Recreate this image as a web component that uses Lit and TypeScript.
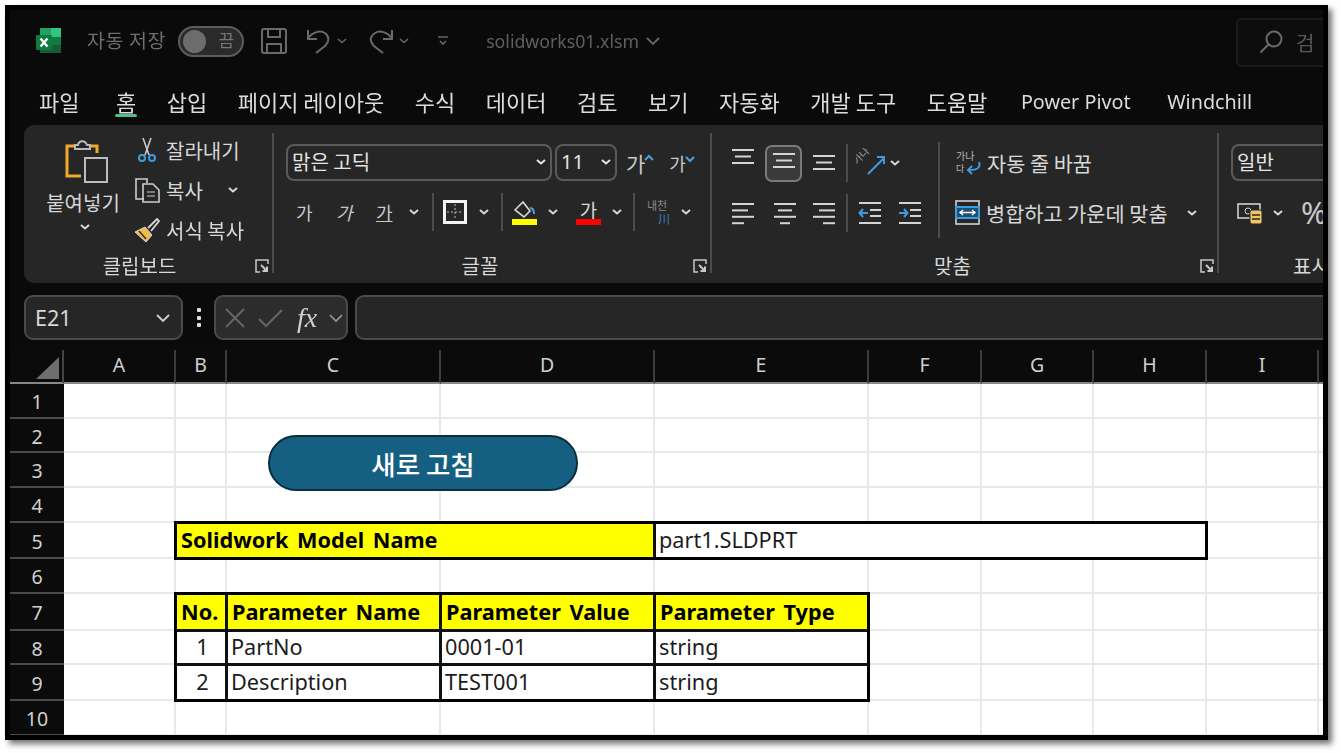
import { LitElement, html, css, svg } from 'lit';
import { customElement } from 'lit/decorators.js';

const COLS = ['A', 'B', 'C', 'D', 'E', 'F', 'G', 'H', 'I', 'J'];
const ROWS = [1, 2, 3, 4, 5, 6, 7, 8, 9, 10];
const TABS = ['파일', '홈', '삽입', '페이지 레이아웃', '수식', '데이터', '검토', '보기', '자동화', '개발 도구', '도움말', 'Power Pivot', 'Windchill'];

// cells with content, keyed by "col+row"
const CELLS: Record<string, { text: string; cls: string; span?: number }> = {
  B5: { text: 'Solidwork Model Name', cls: 'box head', span: 3 },
  E5: { text: 'part1.SLDPRT', cls: 'box', span: 4 },
  B7: { text: 'No.', cls: 'box head' },
  C7: { text: 'Parameter Name', cls: 'box head' },
  D7: { text: 'Parameter Value', cls: 'box head' },
  E7: { text: 'Parameter Type', cls: 'box head' },
  B8: { text: '1', cls: 'box num' },
  C8: { text: 'PartNo', cls: 'box' },
  D8: { text: '0001-01', cls: 'box' },
  E8: { text: 'string', cls: 'box' },
  B9: { text: '2', cls: 'box num' },
  C9: { text: 'Description', cls: 'box' },
  D9: { text: 'TEST001', cls: 'box' },
  E9: { text: 'string', cls: 'box' },
};
// columns swallowed by a merged cell
const HIDDEN = ['C5', 'D5', 'F5', 'G5', 'H5'];

const chev = (cls = 'chev') => html`<svg class=${cls} width="12" height="8" viewBox="0 0 12 8"><path d="M2 2l4 3.5L10 2" fill="none" stroke="currentColor" stroke-width="2"/></svg>`;

// three or more horizontal lines for the alignment buttons
const lines = (rows: [number, number][], color = '#d4d4d4') => html`<svg width="24" height="24" viewBox="0 0 24 24">
  ${rows.map(([a, b], i) => svg`<rect x=${a} y=${2 + i * (rows.length === 4 ? 6.4 : 6.5)} width=${b - a} height="2" fill=${color}/>`)}
</svg>`;

const launcher = html`<svg class="launch" width="14" height="14" viewBox="0 0 14 14" fill="none" stroke="#c8c8c8" stroke-width="1.5">
  <path d="M13 5V1H1v12h4"/><path d="M6 6l6 6M12 7.500V12H7.500" stroke-width="2"/>
</svg>`;

@customElement('app-root')
export class AppRoot extends LitElement {
  static styles = css`
    :host {
      display: block;
      font-family: 'Noto Sans CJK KR', 'Noto Sans', sans-serif;
    }
    .page {
      width: 1341px;
      height: 753px;
      background: #fff;
      padding: 5px 0 0 5px;
      box-sizing: border-box;
      overflow: hidden;
    }
    .window {
      width: 1323px;
      height: 735px;
      box-sizing: border-box;
      border: 5px solid #000;
      background: #0a0a0a;
      box-shadow: 4px 4px 6px rgba(0, 0, 0, 0.55);
      overflow: hidden;
      color: #d8d8d8;
      filter: blur(0.45px);
    }

    /* title bar */
    .title {
      height: 65px;
      box-sizing: border-box;
      display: flex;
      align-items: center;
      padding: 0 0 3px 26px;
      color: #6e6e6e;
      font-size: 19.5px;
      position: relative;
    }
    .auto { margin-left: 25px; padding-bottom: 3px; letter-spacing: 0.6px; }
    .toggle {
      width: 66px;
      height: 31px;
      box-sizing: border-box;
      margin-left: 12px;
      border: 2px solid #5c5c5c;
      border-radius: 16px;
      background: #2a2a2a;
      display: flex;
      align-items: center;
      justify-content: space-between;
      padding: 0 8px 0 3px;
      font-size: 17px;
      color: #777;
    }
    .toggle span:last-child { padding-bottom: 3px; }
    .knob { width: 23px; height: 23px; border-radius: 50%; background: #6c6c6c; }
    .save { margin-left: 17px; }
    .undo { margin-left: 20px; }
    .q-chev { margin-left: 5px; color: #666; }
    .redo { margin-left: 21px; }
    .qat { margin-left: 27px; }
    .file { margin-left: 37px; font-family: 'Noto Sans', sans-serif; font-size: 17.7px; color: #5f5f5f; }
    .file-chev { margin-left: 6px; color: #666; }
    .search {
      margin-left: auto;
      width: 87px;
      height: 49px;
      margin-top: 2px;
      box-sizing: border-box;
      border: 2px solid #1b1b1b;
      border-right: 0;
      border-radius: 6px 0 0 6px;
      background: #0d0d0d;
      display: flex;
      align-items: center;
      gap: 13px;
      padding-left: 21px;
      font-size: 20px;
      color: #5a5a5a;
    }

    /* tabs */
    .tabs {
      height: 50px;
      display: flex;
      align-items: center;
      gap: 30.5px;
      padding: 2px 0 0 29px;
      box-sizing: border-box;
      font-size: 22px;
      color: #dcdcdc;
      white-space: nowrap;
    }
    .tab { position: relative; }
    .tab.on { margin-left: 6px; }
    .tab.latin { font-family: 'Noto Sans', sans-serif; font-size: 19.8px; margin-left: 3px; }
    .tab.latin:last-child { margin-left: 6px; }
    .tab.on::after {
      content: '';
      position: absolute;
      left: -1px;
      right: -1px;
      bottom: 0;
      height: 3px;
      border-radius: 2px;
      background: #4fbf8d;
    }

    /* ribbon */
    .ribbon {
      margin-left: 14px;
      height: 158px;
      box-sizing: border-box;
      padding-top: 8px;
      background: #262626;
      border-radius: 10px 0 0 10px;
      display: flex;
      align-items: flex-start;
      overflow: hidden;
      font-size: 20px;
    }
    .vsep { flex: none; width: 2px; height: 140px; background: #4c4c4c; }
    .group { flex: none; height: 145px; display: flex; flex-direction: column; }
    .group.clip { width: 248px; }
    .group.font { width: 436px; }
    .group.align { width: 505px; }
    .group.number { width: 110px; }
    .body { flex: 1; min-height: 0; }
    .caption { height: 26px; display: flex; align-items: center; font-size: 20px; color: #d8d8d8; }
    .caption span { flex: 1; text-align: center; }
    .font .caption span, .align .caption span { padding-right: 7px; }
    .launch { margin: 2px 3px 0 0; }

    .clip .body { display: flex; padding-left: 20px; }
    .paste { width: 78px; margin-right: 12px; display: flex; flex-direction: column; align-items: center; font-size: 20px; line-height: 24px; }
    .paste svg:first-child { margin: 6px 0 8px 7px; }
    .paste .chev { margin: 8px 0 0 4px; }
    .small { display: flex; flex-direction: column; margin-top: -3px; }
    .small .row { height: 40px; display: flex; align-items: center; gap: 6px; font-size: 20px; white-space: nowrap; }
    .icon-slot { width: 26px; display: flex; justify-content: center; }
    .icon-slot.cut { box-sizing: border-box; justify-content: flex-start; padding-left: 3px; }
    .row .chev { margin-left: 18px; }

    .select {
      height: 37px;
      box-sizing: border-box;
      border: 2px solid #5a5a5a;
      border-radius: 8px;
      display: flex;
      align-items: center;
      justify-content: space-between;
      padding: 0 3px 2px 4px;
      color: #e4e4e4;
    }
    .font .body { padding: 11px 0 0 12px; }
    .font-top { display: flex; align-items: center; gap: 3px; }
    .select.face { width: 266px; }
    .select.size { width: 62px; font-family: 'Noto Sans', sans-serif; }
    .grow { margin-left: 6px; display: flex; align-items: center; gap: 15px; font-size: 21px; color: #c8c8c8; }
    .grow span { display: flex; align-items: flex-start; }
    .grow span + span { font-size: 18px; }
    .grow svg { margin-top: 6px; margin-left: -1px; }
    .font-row {
      margin-top: 12px;
      padding-left: 10px;
      height: 38px;
      display: grid;
      grid-template-columns: 40px 40px 32px 24px 11px 35px 23px 11px 35px 29px 35px 22px 12px 35px auto;
      align-items: center;
    }
    .ga { font-size: 18px; color: #c8c8c8; }
    .ga.i { font-style: italic; }
    .ga.u { text-decoration: underline; }
    .mini-sep { width: 2px; height: 38px; background: #4c4c4c; }
    .swatch { width: 25px; display: flex; flex-direction: column; align-items: center; font-size: 19px; line-height: 19px; }
    .bar { width: 25px; height: 6px; }
    .bar.y { background: #ffff00; }
    .bar.r { background: #ff0000; }
    .phonetic { font-size: 11px; line-height: 13px; color: #8a8a8a; text-align: center; width: 24px; white-space: nowrap; }
    .phonetic b { display: block; font-weight: 400; color: #3a85bf; font-size: 12px; line-height: 13px; letter-spacing: -1px; text-align: right; }

    .align .body { display: flex; padding: 11px 0 0 19px; }
    .a-grid { width: 207px; }
    .a-row { height: 37px; display: grid; align-items: center; }
    .a-row.one { grid-template-columns: 34px 47px 34px 10px 33px auto; }
    .a-row.two { margin-top: 13px; grid-template-columns: 42px 39px 34px 12px 40px auto; }
    .top { align-self: start; margin-top: 3px; }
    .bot { align-self: end; margin-bottom: -1px; }
    .picked {
      width: 37px;
      height: 37px;
      box-sizing: border-box;
      border: 2px solid #7a7a7a;
      border-radius: 7px;
      background: #3a3a3a;
      display: flex;
      align-items: center;
      justify-content: center;
    }
    .short-sep { width: 2px; height: 38px; background: #4c4c4c; }
    .wrap-sep { width: 2px; height: 96px; margin-top: -2px; background: #4c4c4c; }
    .a-text { padding-left: 15px; }
    .a-text .row { height: 37px; display: flex; align-items: center; gap: 6px; white-space: nowrap; font-size: 20.8px; }
    .a-text .row + .row { margin-top: 13px; }
    .a-text .chev { margin-left: 12px; }

    .number .body { padding: 11px 0 0 12px; white-space: nowrap; }
    .select.general { width: 120px; border-right: 0; border-radius: 8px 0 0 8px; }
    .num-row { margin-top: 13px; padding-left: 6px; height: 37px; display: flex; align-items: center; gap: 9px; }
    .percent { font-family: 'Noto Sans', sans-serif; font-size: 31px; color: #c8c8c8; margin-left: 8px; line-height: 1; }
    .number .caption { padding-left: 74px; white-space: nowrap; }

    /* formula bar */
    .formula {
      height: 45px;
      margin-top: 12px;
      padding-left: 14px;
      display: flex;
      align-items: stretch;
    }
    .name {
      width: 159px;
      box-sizing: border-box;
      border: 2px solid #4a4a4a;
      border-radius: 9px;
      background: #262626;
      display: flex;
      align-items: center;
      justify-content: space-between;
      padding: 0 10px 0 9px;
      font-family: 'Noto Sans', sans-serif;
      font-size: 21.5px;
      color: #d8d8d8;
    }
    .dots { width: 31px; display: flex; flex-direction: column; align-items: center; justify-content: center; gap: 3.5px; }
    .dots i { width: 4px; height: 4px; background: #ddd; border-radius: 1px; }
    .fx {
      width: 134px;
      box-sizing: border-box;
      border: 2px solid #4a4a4a;
      border-radius: 9px;
      background: #2c2c2c;
      display: flex;
      align-items: center;
      padding-left: 8px;
      gap: 11px;
    }
    .fx-t { font-family: 'Liberation Serif', serif; font-style: italic; font-weight: 400; font-size: 28px; color: #d0d0d0; margin-left: 3px; }
    .input {
      flex: 1;
      margin-left: 7px;
      box-sizing: border-box;
      border: 2px solid #4a4a4a;
      border-right: 0;
      border-radius: 9px 0 0 9px;
      background: #262626;
    }

    /* sheet */
    .sheet { position: relative; margin-top: 10px; height: 385px; overflow: hidden; }
    .grid {
      display: grid;
      grid-template-columns: 54px 112px 51px 214px 214px 214px 113px 112px 113px 112px 112px;
      grid-template-rows: 34px 35px 34px 35px 35px 36px 35px 37px 34px 36px 35px;
      background: #fff;
    }
    .corner, .ch, .rh { background: #0b0b0b; color: #d0d0d0; font-family: 'Noto Sans', sans-serif; font-size: 19.5px; display: flex; align-items: center; justify-content: center; box-sizing: border-box; }
    .corner { justify-content: flex-start; padding: 4px 0 0 26px; border-bottom: 2px solid #888; border-right: 2px solid #444; }
    .ch { border-right: 2px solid #3c3c3c; border-bottom: 2px solid #888; padding-bottom: 4px; }
    .rh { border-bottom: 2px solid #4a4a4a; padding-top: 2px; }
    .cell {
      box-sizing: border-box;
      border-right: 2px solid #e8e8e8;
      border-bottom: 2px solid #e8e8e8;
      font-family: 'Noto Sans', sans-serif;
      font-size: 21.7px;
      color: #1c1c1c;
      display: flex;
      align-items: center;
      white-space: nowrap;
      overflow: hidden;
      padding-bottom: 2px;
    }
    .cell.box {
      border: 2px solid #111;
      margin: -1px 0 0 -1px;
      padding-left: 3px;
    }
    .cell.head { background: #ffff00; font-weight: 700; color: #000; padding-left: 4px; word-spacing: 3px; }
    .cell.num { justify-content: center; }
    .frame { border: 3px solid #000; margin: -2px -1px -1px -2px; pointer-events: none; }
    .refresh {
      position: absolute;
      left: 258px;
      top: 85px;
      width: 310px;
      height: 56px;
      box-sizing: border-box;
      border: 2px solid #0c2d3e;
      border-radius: 28px;
      background: #156082;
      color: #fff;
      font-size: 26.5px;
      font-weight: 500;
      display: flex;
      align-items: center;
      justify-content: center;
    }
  `;

  private renderTitle() {
    return html`<div class="title">
      <svg width="26" height="26" viewBox="0 0 26 26">
        <rect x="4" y="0" width="21" height="9" fill="#21a366"/>
        <rect x="4" y="9" width="21" height="8" fill="#107c41"/>
        <rect x="4" y="17" width="21" height="8" fill="#185c37"/>
        <rect x="15" y="0" width="10" height="9" fill="#33c481"/>
        <rect x="0" y="7" width="16" height="15" rx="1" fill="#0f7b3f"/>
        <path d="M4.500 10.500l7 8M11.500 10.500l-7 8" stroke="#fff" stroke-width="2.4"/>
      </svg>
      <span class="auto">자동 저장</span>
      <div class="toggle"><span class="knob"></span><span>끔</span></div>
      <svg class="save" width="26" height="26" viewBox="0 0 26 26" fill="none" stroke="#6a6a6a" stroke-width="2">
        <path d="M1 3a2 2 0 012-2h20a2 2 0 012 2v20a2 2 0 01-2 2H3a2 2 0 01-2-2z"/><path d="M7 1v8h12V1M6 25v-9h14v9"/>
      </svg>
      <svg class="undo" width="24" height="26" viewBox="0 0 24 26" fill="none" stroke="#6a6a6a" stroke-width="2">
        <path d="M1 2v9h9"/><path d="M1 10c5-6 12-8 17-5 5 4 4 9 0 13l-9 7"/>
      </svg>
      <svg class="q-chev" width="12" height="8" viewBox="0 0 12 8"><path d="M2 2l4 3.5L10 2" fill="none" stroke="currentColor" stroke-width="1.6"/></svg>
      <svg class="redo" width="24" height="26" viewBox="0 0 24 26" fill="none" stroke="#6a6a6a" stroke-width="2">
        <path d="M23 2v9h-9"/><path d="M23 10C18 4 11 2 6 5c-6 4-5 9-1 13l9 7"/>
      </svg>
      <svg class="q-chev" width="12" height="8" viewBox="0 0 12 8"><path d="M2 2l4 3.5L10 2" fill="none" stroke="currentColor" stroke-width="1.6"/></svg>
      <svg class="qat" width="12" height="12" viewBox="0 0 12 12" fill="none" stroke="#666" stroke-width="1.6"><path d="M1 2h10M3 6l3 3 3-3"/></svg>
      <span class="file">solidworks01.xlsm</span>
      <svg class="file-chev" width="16" height="10" viewBox="0 0 16 10"><path d="M2 2l6 6 6-6" fill="none" stroke="currentColor" stroke-width="1.8"/></svg>
      <div class="search">
        <svg width="24" height="24" viewBox="0 0 24 24" fill="none" stroke="#6a6a6a" stroke-width="2"><circle cx="15" cy="9" r="7.5"/><path d="M9.5 14.5L1.5 22.5"/></svg>
        <span>검</span>
      </div>
    </div>`;
  }

  private renderClipboard() {
    return html`<div class="group clip">
      <div class="body">
        <div class="paste">
          <svg width="44" height="44" viewBox="0 0 44 44" fill="none">
            <path d="M9 7H2v30h14" stroke="#f0a92c" stroke-width="3"/>
            <path d="M25 7h7v7" stroke="#f0a92c" stroke-width="3"/>
            <path d="M10 10V6h3c1-5 7-5 9 0h3v4z" stroke="#bbb" stroke-width="2" fill="#262626"/>
            <rect x="20" y="19" width="22" height="24" stroke="#bdbdbd" stroke-width="2" fill="#262626"/>
          </svg>
          <span>붙여넣기</span>
          ${chev()}
        </div>
        <div class="small">
          <div class="row">
            <span class="icon-slot cut"><svg width="20" height="26" viewBox="0 0 20 26" fill="none">
              <path d="M6 1l6 17M14 1L8 18" stroke="#c8c8c8" stroke-width="1.6"/>
              <circle cx="5" cy="21" r="3" stroke="#3f9be0" stroke-width="2"/><circle cx="15" cy="21" r="3" stroke="#3f9be0" stroke-width="2"/>
            </svg></span>잘라내기
          </div>
          <div class="row">
            <span class="icon-slot"><svg width="26" height="26" viewBox="0 0 26 26" fill="none" stroke="#cfcfcf" stroke-width="1.6">
              <path d="M10 22H2V2h11v4"/><path d="M9 7h10l6 6v12H9z"/><path d="M13 15h8M13 19h8" stroke-width="1.2"/>
            </svg></span>복사${chev()}
          </div>
          <div class="row">
            <span class="icon-slot"><svg width="26" height="26" viewBox="0 0 26 26" fill="none">
              <path d="M1 15l10-5 7 8-6 7z" fill="#f1b94a" stroke="#d8d8d8" stroke-width="1"/>
              <path d="M5 14l7 8" stroke="#262626" stroke-width="1.4"/>
              <path d="M14 11l9-9 2 2-8 10" stroke="#d8d8d8" stroke-width="1.8"/>
            </svg></span>서식 복사
          </div>
        </div>
      </div>
      <div class="caption"><span>클립보드</span>${launcher}</div>
    </div>`;
  }

  private renderFont() {
    return html`<div class="group font">
      <div class="body">
        <div class="font-top">
          <div class="select face"><span>맑은 고딕</span>${chev()}</div>
          <div class="select size"><span>11</span>${chev()}</div>
          <div class="grow">
            <span>가<svg width="10" height="7" viewBox="0 0 10 7"><path d="M1 6l4-4 4 4" fill="none" stroke="#4d9fdc" stroke-width="2"/></svg></span>
            <span>가<svg width="10" height="7" viewBox="0 0 10 7"><path d="M1 1l4 4 4-4" fill="none" stroke="#4d9fdc" stroke-width="2"/></svg></span>
          </div>
        </div>
        <div class="font-row">
          <span class="ga">가</span>
          <span class="ga i">가</span>
          <span class="ga u">가</span>
          ${chev()}
          <span class="mini-sep"></span>
          <svg width="24" height="24" viewBox="0 0 24 24" fill="none">
            <rect x="1.500" y="1.500" width="21" height="21" stroke="#f4f4f4" stroke-width="3"/>
            <path d="M12 4v16M4 12h16" stroke="#bbb" stroke-width="1" stroke-dasharray="2 2"/>
          </svg>
          ${chev()}
          <span class="mini-sep"></span>
          <div class="swatch">
            <svg width="25" height="19" viewBox="0 0 25 19" fill="none">
              <path d="M3 10l8-8 7 9-6 6z" stroke="#d8d8d8" stroke-width="1.6"/>
              <path d="M18 8c3 0 4 3 4 6" stroke="#4d9fdc" stroke-width="2"/>
            </svg>
            <span class="bar y"></span>
          </div>
          ${chev()}
          <div class="swatch"><span>가</span><span class="bar r"></span></div>
          ${chev()}
          <span class="mini-sep"></span>
          <div class="phonetic">내천<b>川</b></div>
          ${chev()}
        </div>
      </div>
      <div class="caption"><span>글꼴</span>${launcher}</div>
    </div>`;
  }

  private renderAlign() {
    const c: [number, number][] = [[1, 23], [4, 20], [1, 23]];
    return html`<div class="group align">
      <div class="body">
        <div class="a-grid">
          <div class="a-row one">
            <span class="top">${lines(c)}</span>
            <span class="picked">${lines(c)}</span>
            <span class="bot">${lines(c)}</span>
            <span class="short-sep"></span>
            <svg width="30" height="30" viewBox="0 0 30 30" fill="none">
              <text font-size="10" fill="#aaa" transform="translate(1 17) rotate(-45)">가나</text>
              <path d="M12 26L28 10M21 9h7v7" stroke="#3f9be0" stroke-width="2"/>
            </svg>
            ${chev()}
          </div>
          <div class="a-row two">
            ${lines([[1, 23], [1, 17], [1, 23], [1, 13]])}
            ${lines([[1, 23], [5, 19], [1, 23], [7, 17]])}
            ${lines([[1, 23], [7, 23], [1, 23], [11, 23]])}
            <span class="short-sep"></span>
            <svg width="24" height="24" viewBox="0 0 24 24" fill="none">
              <path d="M1 2h22M12 9h11M12 15h11M1 22h22" stroke="#d4d4d4" stroke-width="2"/>
              <path d="M10 12H2M5 8l-3.500 4 3.500 4" stroke="#3f9be0" stroke-width="2"/>
            </svg>
            <svg width="24" height="24" viewBox="0 0 24 24" fill="none">
              <path d="M1 2h22M12 9h11M12 15h11M1 22h22" stroke="#d4d4d4" stroke-width="2"/>
              <path d="M1 12h8M6 8l3.500 4L6 16" stroke="#3f9be0" stroke-width="2"/>
            </svg>
          </div>
        </div>
        <span class="wrap-sep"></span>
        <div class="a-text">
          <div class="row">
            <svg width="26" height="26" viewBox="0 0 26 26" fill="none">
              <text x="1" y="10" font-size="10" fill="#bbb">가나</text>
              <text x="1" y="22" font-size="9" fill="#bbb">다</text>
              <path d="M24 12c2 6-2 8-10 8M17 16l-4 4 4 4" stroke="#3f9be0" stroke-width="2"/>
            </svg>
            <span>자동 줄 바꿈</span>
          </div>
          <div class="row">
            <svg width="25" height="25" viewBox="0 0 25 25" fill="none">
              <rect x="1" y="1" width="23" height="23" stroke="#d4d4d4" stroke-width="1.6"/>
              <rect x="1" y="7" width="23" height="11" fill="#1d4f74" stroke="#3f9be0" stroke-width="2"/>
              <path d="M5 12.500h15M8 10l-3 2.500L8 15M17 10l3 2.500-3 2.500" stroke="#fff" stroke-width="1.4"/>
            </svg>
            <span>병합하고 가운데 맞춤</span>${chev()}
          </div>
        </div>
      </div>
      <div class="caption"><span>맞춤</span>${launcher}</div>
    </div>`;
  }

  private renderNumber() {
    return html`<div class="group number">
      <div class="body">
        <div class="select general"><span>일반</span></div>
        <div class="num-row">
          <svg width="26" height="24" viewBox="0 0 26 24" fill="none">
            <rect x="1" y="3" width="22" height="14" stroke="#cfcfcf" stroke-width="1.6"/>
            <circle cx="11" cy="10" r="3" stroke="#cfcfcf"/>
            <rect x="13" y="9" width="12" height="14" rx="2" fill="#f1c46a" stroke="#262626"/>
            <path d="M15 14h8M15 18h8" stroke="#262626" stroke-width="1.4"/>
          </svg>
          ${chev()}
          <span class="percent">%</span>
        </div>
      </div>
      <div class="caption">표시</div>
    </div>`;
  }

  private renderCell(col: string, colIdx: number, row: number) {
    const key = col + row;
    if (HIDDEN.includes(key)) return null;
    const cell = CELLS[key];
    const area = `grid-area: ${row + 1} / ${colIdx + 2} / auto / span ${cell?.span ?? 1}`;
    return html`<div class="cell ${cell ? cell.cls : ''}" style=${area}>${cell ? cell.text : ''}</div>`;
  }

  render() {
    return html`<div class="page">
      <div class="window">
        ${this.renderTitle()}
        <div class="tabs">
          ${TABS.map((t) => html`<span class="tab ${t === '홈' ? 'on' : ''} ${/^[A-Z]/.test(t) ? 'latin' : ''}">${t}</span>`)}
        </div>
        <div class="ribbon">
          ${this.renderClipboard()}<span class="vsep"></span>
          ${this.renderFont()}<span class="vsep"></span>
          ${this.renderAlign()}<span class="vsep"></span>
          ${this.renderNumber()}
        </div>
        <div class="formula">
          <div class="name"><span>E21</span><svg width="16" height="10" viewBox="0 0 16 10"><path d="M2 2l6 6 6-6" fill="none" stroke="#cfcfcf" stroke-width="1.8"/></svg></div>
          <div class="dots"><i></i><i></i><i></i></div>
          <div class="fx">
            <svg width="22" height="20" viewBox="0 0 22 20" fill="none" stroke="#666" stroke-width="2"><path d="M2 1l18 18M20 1L2 19"/></svg>
            <svg width="26" height="20" viewBox="0 0 26 20" fill="none" stroke="#666" stroke-width="2"><path d="M2 11l7 7L25 2"/></svg>
            <span class="fx-t">fx</span>
            <svg width="16" height="10" viewBox="0 0 16 10"><path d="M2 2l6 6 6-6" fill="none" stroke="#9a9a9a" stroke-width="1.6"/></svg>
          </div>
          <div class="input"></div>
        </div>
        <div class="sheet">
          <div class="grid">
            <div class="corner" style="grid-area: 1 / 1"><svg width="23" height="22" viewBox="0 0 23 22"><path d="M23 0v22H0z" fill="#6e6e6e"/></svg></div>
            ${COLS.map((c, i) => html`<div class="ch" style=${`grid-area: 1 / ${i + 2}`}>${c}</div>`)}
            ${ROWS.map((r) => html`<div class="rh" style=${`grid-area: ${r + 1} / 1`}>${r}</div>${COLS.map((c, i) => this.renderCell(c, i, r))}`)}
            <div class="frame" style="grid-area: 6 / 3 / 7 / 10"></div>
            <div class="frame" style="grid-area: 8 / 3 / 11 / 7"></div>
          </div>
          <div class="refresh">새로 고침</div>
        </div>
      </div>
    </div>`;
  }
}
